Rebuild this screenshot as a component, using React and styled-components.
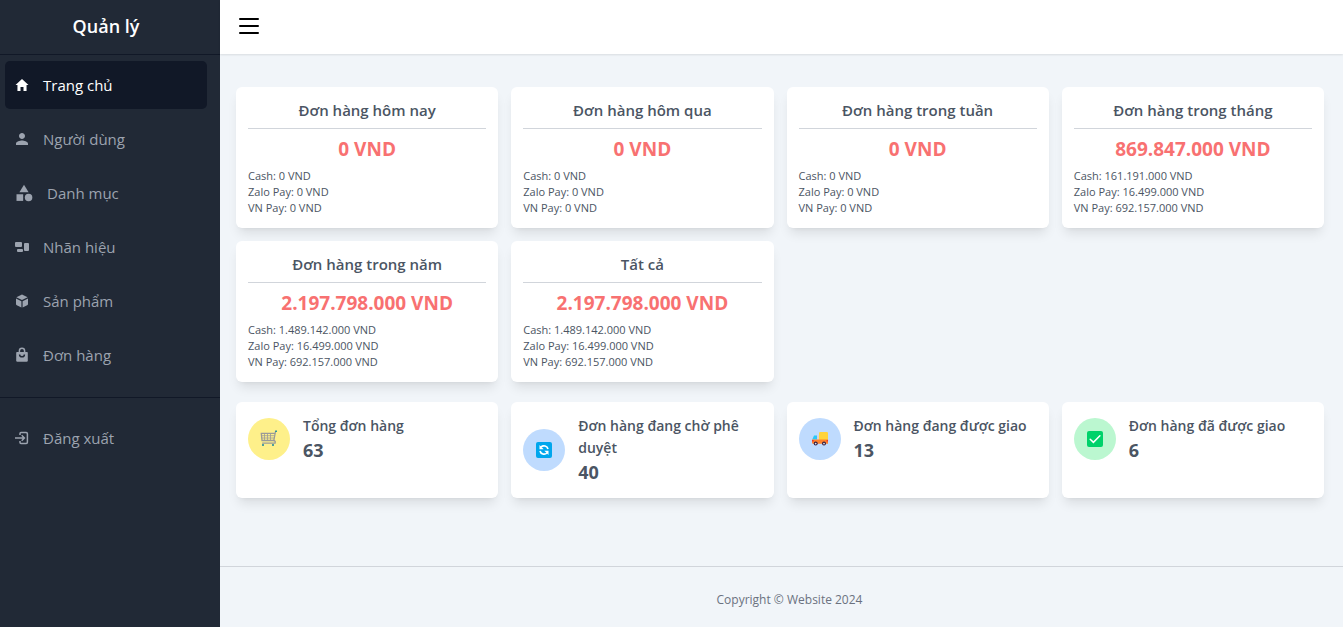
import React from "react";
import styled, { createGlobalStyle } from "styled-components";
import { IoMdHome, IoMdPerson } from "react-icons/io";
import { MdCategory } from "react-icons/md";

const GlobalStyle = createGlobalStyle`
  * { box-sizing: border-box; margin: 0; padding: 0; }
  body { font-family: "Open Sans", "Noto Sans", sans-serif; color: #4b5563; background: #f1f5f9; }
`;

const Shell = styled.div`
  display: flex;
  min-height: 100vh;
`;

const Sidebar = styled.aside`
  flex: 0 0 220px;
  background: #212936;
`;

const Brand = styled.h1`
  height: 55px;
  padding-right: 8px;
  border-bottom: 1px solid #111827;
  color: #fff;
  font-size: 18px;
  font-weight: 600;
  line-height: 52px;
  text-align: center;
`;

const NavList = styled.ul`
  list-style: none;
  display: flex;
  flex-direction: column;
  gap: 6px;
  padding: ${(p) => (p.$divided ? "6px 13px 18px 5px" : "16px 13px 16px 5px")};
  border-bottom: ${(p) => (p.$divided ? "1px solid #111827" : "none")};
`;

const NavLink = styled.a`
  display: flex;
  align-items: center;
  gap: 13px;
  height: 48px;
  padding-left: 9px;
  border-radius: 5px;
  color: ${(p) => (p.$active ? "#fff" : "#9ca3af")};
  background: ${(p) => (p.$active ? "#111827" : "transparent")};
  font-size: 15px;
  text-decoration: none;

  svg { flex: none; }
`;

const Page = styled.div`
  flex: 1;
  min-width: 0;
  display: flex;
  flex-direction: column;
`;

const TopBar = styled.header`
  display: flex;
  align-items: center;
  height: 54px;
  padding: 0 16px 2px;
  background: #fff;
  box-shadow: 0 1px 2px rgba(0, 0, 0, 0.1);
`;

const MenuButton = styled.button`
  display: flex;
  border: 0;
  background: none;
  cursor: pointer;
`;

const Main = styled.main`
  flex: 1;
  display: flex;
  flex-direction: column;
  gap: 20px;
  padding: 33px 19px 16px 16px;
`;

const CardGrid = styled.section`
  display: grid;
  grid-template-columns: repeat(4, minmax(0, 1fr));
  gap: 13px;
`;

const Card = styled.article`
  padding: 12px;
  border-radius: 6px;
  background: #fff;
  box-shadow: 0 8px 12px -3px rgba(0, 0, 0, 0.1), 0 3px 5px -4px rgba(0, 0, 0, 0.1);
`;

const RevenueTitle = styled.h2`
  height: 30px;
  border-bottom: 1px solid #d1d5db;
  font-size: 15px;
  font-weight: 600;
  line-height: 22px;
  text-align: center;
`;

const Revenue = styled.p`
  padding: 7px 0 6px;
  color: #f87171;
  font-size: 19px;
  font-weight: 700;
  line-height: 26px;
  text-align: center;
`;

const Methods = styled.ul`
  list-style: none;
  font-size: 11px;
  line-height: 16px;
`;

const StatusCard = styled(Card)`
  display: flex;
  align-items: flex-start;
  padding: 13px 12px;
`;

const StatusBody = styled.div`
  display: flex;
  align-items: center;
  gap: 13px;
`;

const Badge = styled.span`
  display: flex;
  flex: none;
  align-items: center;
  justify-content: center;
  width: 42px;
  height: 42px;
  border-radius: 50%;
  background: ${(p) => p.$color};
`;

const StatusLabel = styled.h3`
  font-size: 14px;
  font-weight: 600;
  line-height: 22px;
`;

const StatusCount = styled.p`
  font-size: 18px;
  font-weight: 700;
  line-height: 26px;
`;

const Footer = styled.footer`
  border-top: 1px solid #d1d5db;
  height: 61px;
  padding-left: 16px;
  color: #6b7280;
  font-size: 12px;
  line-height: 66px;
  text-align: center;
`;

const BrandIcon = () => (
  <svg width="16" height="16" viewBox="0 0 16 16" fill="currentColor">
    <rect x="1" y="3" width="7" height="5" rx="1" />
    <rect x="3" y="10" width="6" height="3" rx="1" />
    <rect x="10" y="4" width="5" height="8" rx="1" />
  </svg>
);

const CubeIcon = () => (
  <svg width="16" height="16" viewBox="0 0 16 16" fill="currentColor">
    <path d="M8 1.4 13.6 4.2 8 7.1 2.4 4.2zM2 5.5l5.4 2.8v6.1L2.8 12.2Q2 11.8 2 10.9zM14 5.5v5.4q0 .9-.8 1.3l-4.6 2.2V8.3z" />
  </svg>
);

const BagIcon = () => (
  <svg width="16" height="16" viewBox="-1 0 16 16" fill="none" stroke="currentColor">
    <path d="M2 5h10q.8 0 .8 1v7.5q0 1.2-1.2 1.2H2.4q-1.2 0-1.2-1.2V6q0-1 .8-1z" fill="currentColor" stroke="none" />
    <path d="M4.4 5V3.8a2.6 2.6 0 0 1 5.2 0V5" strokeWidth="1.5" />
    <path d="M4.6 7.4a2.4 2.4 0 0 0 4.8 0" stroke="#212936" strokeWidth="1.5" />
  </svg>
);

const LogoutIcon = () => (
  <svg width="16" height="16" viewBox="-1 -1 16 16" fill="none" stroke="currentColor" strokeWidth="1.5">
    <path d="M5 4V2.5q0-1 1-1h5.2q1.2 0 1.2 1.2v8.6q0 1.2-1.2 1.2H6q-1 0-1-1V10M0 7h9M6.7 4.3 9.4 7 6.7 9.7" />
  </svg>
);

const MenuIcon = () => (
  <svg width="24" height="20" viewBox="0 0 24 20" fill="none" stroke="#000" strokeWidth="2" strokeLinecap="round">
    <path d="M4 3h18M4 10h18M4 17h18" />
  </svg>
);

const CartIcon = () => (
  <svg width="18" height="18" viewBox="0 0 18 18" fill="none" stroke="#9b9a98">
    <path d="M15.5 1.5 13.8 10.5H2L1.3 3.4H15" strokeWidth="1.3" />
    <path d="M1.6 5.7h13M1.8 8h12.4M4.5 3.5v7M7.5 3.5v7M10.5 3.5v7" strokeWidth=".8" />
    <path d="M13.8 10.5q2 .3 1.3 2.7H2.2" strokeWidth="1.3" />
    <path d="M15.2 1.3h1.7" stroke="#1686a0" strokeWidth="1.6" />
    <circle cx="3" cy="15" r="1" fill="#1686a0" stroke="none" />
    <circle cx="13" cy="15" r="1" fill="#1686a0" stroke="none" />
  </svg>
);

const RefreshIcon = () => (
  <svg width="16" height="16" viewBox="0 0 16 16" fill="none">
    <rect width="16" height="16" rx="2" fill="#00a6ed" />
    <path d="M12 7A4.2 4.2 0 0 0 5 5M4 9a4.2 4.2 0 0 0 7 2" stroke="#fff" strokeWidth="1.7" />
    <path d="M3.5 3v4.2h4.2zM12.5 13V8.8H8.3z" fill="#fff" />
  </svg>
);

const TruckIcon = () => (
  <svg width="18" height="16" viewBox="0 0 18 16">
    <path d="M8 2.2Q8 1 9.2 1h6.6Q17 1 17 2.2V9H8z" fill="#ffd43b" />
    <path d="M3.2 4.5H8v4H1.2z" fill="#d3d3e0" />
    <path d="M3 4.5h3v4H1.3z" fill="#26c9fc" />
    <path d="M1 8.5h16v4.2H2q-1 0-1-1z" fill="#ff822d" />
    <path d="M1 9h1.6v1.4H1zM15.6 9H17v1.4h-1.4z" fill="#e8352e" />
    <circle cx="4.7" cy="12.6" r="2" fill="#321b41" />
    <circle cx="13" cy="12.6" r="2" fill="#321b41" />
    <circle cx="4.7" cy="12.6" r=".9" fill="#e6e6e6" />
    <circle cx="13" cy="12.6" r=".9" fill="#e6e6e6" />
  </svg>
);

const CheckIcon = () => (
  <svg width="16" height="16" viewBox="0 0 16 16" fill="none">
    <rect width="16" height="16" rx="2" fill="#00d26a" />
    <path d="m3.2 8.2 3.2 3.2 6.5-6.6" stroke="#fff" strokeWidth="1.5" strokeLinecap="round" />
  </svg>
);

const NAV = [
  { label: "Trang chủ", icon: <IoMdHome size={16} />, active: true },
  { label: "Người dùng", icon: <IoMdPerson size={16} /> },
  { label: "Danh mục", icon: <MdCategory size={20} /> },
  { label: "Nhãn hiệu", icon: <BrandIcon /> },
  { label: "Sản phẩm", icon: <CubeIcon /> },
  { label: "Đơn hàng", icon: <BagIcon /> },
];

const REVENUES = [
  { title: "Đơn hàng hôm nay", total: "0", cash: "0", zalo: "0", vn: "0" },
  { title: "Đơn hàng hôm qua", total: "0", cash: "0", zalo: "0", vn: "0" },
  { title: "Đơn hàng trong tuần", total: "0", cash: "0", zalo: "0", vn: "0" },
  { title: "Đơn hàng trong tháng", total: "869.847.000", cash: "161.191.000", zalo: "16.499.000", vn: "692.157.000" },
  { title: "Đơn hàng trong năm", total: "2.197.798.000", cash: "1.489.142.000", zalo: "16.499.000", vn: "692.157.000" },
  { title: "Tất cả", total: "2.197.798.000", cash: "1.489.142.000", zalo: "16.499.000", vn: "692.157.000" },
];

const STATUSES = [
  { label: "Tổng đơn hàng", count: 63, color: "#fef08a", icon: <CartIcon /> },
  { label: "Đơn hàng đang chờ phê duyệt", count: 40, color: "#bfdbfe", icon: <RefreshIcon /> },
  { label: "Đơn hàng đang được giao", count: 13, color: "#bfdbfe", icon: <TruckIcon /> },
  { label: "Đơn hàng đã được giao", count: 6, color: "#bbf7d0", icon: <CheckIcon /> },
];

export default function App() {
  return (
    <>
      <GlobalStyle />
      <Shell>
        <Sidebar>
          <Brand>Quản lý</Brand>
          <nav>
            <NavList $divided>
              {NAV.map((item) => (
                <li key={item.label}>
                  <NavLink href="#" $active={item.active}>
                    {item.icon}
                    {item.label}
                  </NavLink>
                </li>
              ))}
            </NavList>
            <NavList>
              <li>
                <NavLink href="#">
                  <LogoutIcon />
                  Đăng xuất
                </NavLink>
              </li>
            </NavList>
          </nav>
        </Sidebar>
        <Page>
          <TopBar>
            <MenuButton aria-label="Menu">
              <MenuIcon />
            </MenuButton>
          </TopBar>
          <Main>
            <CardGrid>
              {REVENUES.map((r) => (
                <Card key={r.title}>
                  <RevenueTitle>{r.title}</RevenueTitle>
                  <Revenue>{r.total} VND</Revenue>
                  <Methods>
                    <li>Cash: {r.cash} VND</li>
                    <li>Zalo Pay: {r.zalo} VND</li>
                    <li>VN Pay: {r.vn} VND</li>
                  </Methods>
                </Card>
              ))}
            </CardGrid>
            <CardGrid>
              {STATUSES.map((s) => (
                <StatusCard key={s.label}>
                  <StatusBody>
                    <Badge $color={s.color}>{s.icon}</Badge>
                    <div>
                      <StatusLabel>{s.label}</StatusLabel>
                      <StatusCount>{s.count}</StatusCount>
                    </div>
                  </StatusBody>
                </StatusCard>
              ))}
            </CardGrid>
          </Main>
          <Footer>Copyright © Website 2024</Footer>
        </Page>
      </Shell>
    </>
  );
}
